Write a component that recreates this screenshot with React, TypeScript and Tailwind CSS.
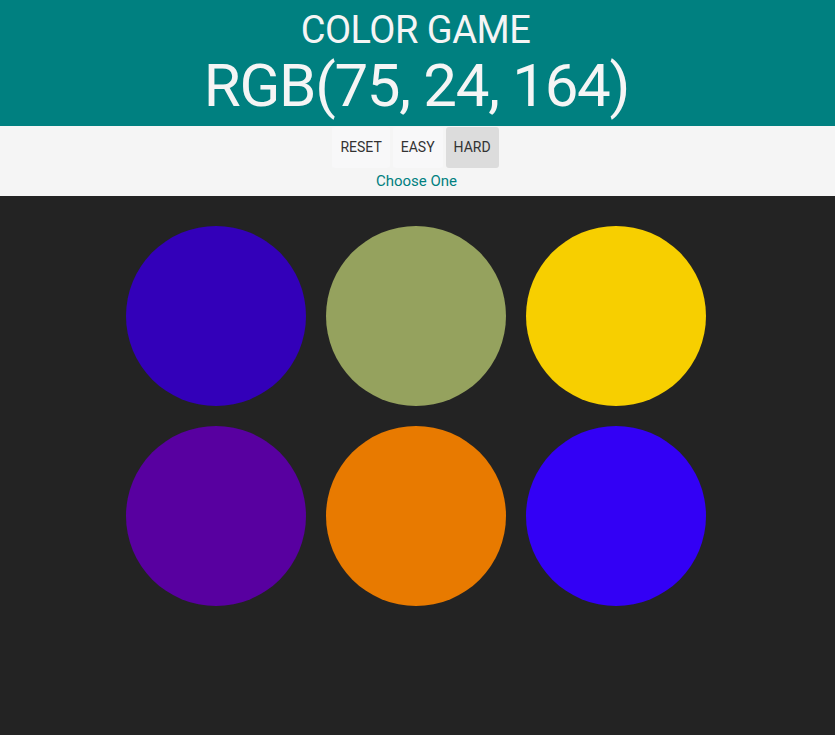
import React from "react";

const colors = ["#3300b9", "#95a25e", "#f7cf00", "#5800a0", "#e87a00", "#3300f5"];

export default function App() {
  return (
    <div className="min-h-[735px] bg-[#232323]" style={{ fontFamily: "Roboto, 'Noto Sans', sans-serif" }}>
      <div className="h-[126px] bg-[#008080] text-[#f5f5f5] flex flex-col items-center">
        <div className="text-[38px] leading-[38px] mt-[11px] tracking-[-0.5px] -translate-x-[2px]">COLOR GAME</div>
        <div className="text-[60px] leading-[60px] mt-[7px] tracking-[-1.3px] -translate-x-[1px]">RGB(75, 24, 164)</div>
      </div>
      <div className="h-[70px] bg-[#f5f5f5] flex flex-col items-center">
        <div className="flex gap-[3px] mt-[1px] -translate-x-[2px]">
          <button className="h-[41px] px-[8px] rounded-[3px] bg-[#f8f8f9] text-[#333] text-[14px]">RESET</button>
          <button className="h-[41px] px-[8px] rounded-[3px] bg-[#f8f8f9] text-[#333] text-[14px]">EASY</button>
          <button className="h-[41px] px-[8px] rounded-[3px] bg-[#dcdcdc] text-[#333] text-[14px]">HARD</button>
        </div>
        <div className="text-[#008080] text-[15px] mt-[2px] -translate-x-[1px]">Choose One</div>
      </div>
      <div className="w-[600px] ml-[calc(50%-301.5px)] pt-[20px] flex flex-wrap">
        {colors.map((c) => (
          <div key={c} className="w-[180px] h-[180px] m-[10px] rounded-full" style={{ background: c }} />
        ))}
      </div>
    </div>
  );
}
